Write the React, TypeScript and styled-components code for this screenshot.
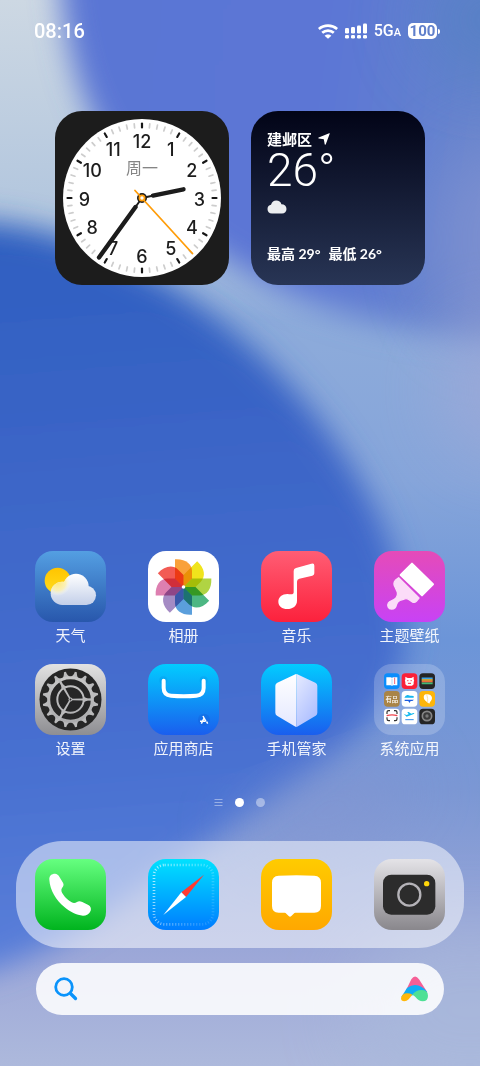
import React from "react";
import styled, { createGlobalStyle } from "styled-components";

const GlobalStyle = createGlobalStyle`
  *, *::before, *::after { box-sizing: border-box; }
  body {
    margin: 0;
    font-family: Lato, "Noto Sans CJK SC", sans-serif;
    color: #fff;
    background: #5b7fd0;
  }
  button, input { font: inherit; color: inherit; }
`;

const Screen = styled.div`
  display: grid;
  min-height: 100vh;
  overflow: hidden;
  & > * { grid-area: 1 / 1; }
`;

const WallpaperArt = styled.svg`
  width: 100%;
  height: 100%;
  min-height: 0;
  contain: size;
`;

const Home = styled.div`
  display: flex;
  flex-direction: column;
  min-height: 100vh;
  padding-bottom: 51px;
  z-index: 1;
`;

const StatusBar = styled.header`
  display: flex;
  align-items: center;
  justify-content: space-between;
  height: 62px;
  padding: 0 40px 0 34px;
`;

const Time = styled.time`
  font-family: Roboto, sans-serif;
  font-size: 20px;
  font-weight: 500;
  line-height: 24px;
`;

const StatusIcons = styled.div`
  display: flex;
  align-items: center;
  gap: 7px;
`;

const Network = styled.span`
  font-family: Roboto, sans-serif;
  font-size: 16px;
  font-weight: 500;
  line-height: 18px;
  padding-top: 1px;
  small { font-size: 11px; }
`;

const Battery = styled.span`
  display: flex;
  align-items: center;
  gap: 1px;
  &::after {
    content: "";
    width: 2px;
    height: 5px;
    border-radius: 0 2px 2px 0;
    background: #fff;
  }
`;

const BatteryLevel = styled.span`
  width: 29px;
  height: 16px;
  border-radius: 5px;
  background: #fff;
  color: #5f7fcb;
  font-family: Roboto, sans-serif;
  font-size: 15px;
  font-weight: 700;
  line-height: 16px;
  text-align: center;
`;

const Widgets = styled.section`
  display: flex;
  gap: 22px;
  padding: 49px 55px 0;
`;

const Widget = styled.article<{ $background: string }>`
  flex: 1;
  aspect-ratio: 1;
  display: flex;
  flex-direction: column;
  border-radius: 27px;
  background: ${(p) => p.$background};
  overflow: hidden;
`;

const WeatherBody = styled.div`
  flex: 1;
  display: flex;
  flex-direction: column;
  padding: 18px 16px 21px;
`;

const Place = styled.div`
  display: flex;
  align-items: center;
  gap: 6px;
  font-size: 15px;
  font-weight: 700;
  line-height: 20px;
`;

const Temperature = styled.div`
  font-family: Roboto, sans-serif;
  font-size: 46px;
  font-weight: 300;
  line-height: 42px;
  margin-bottom: 9px;
`;

const Range = styled.div`
  display: flex;
  gap: 8px;
  margin-top: auto;
  font-size: 14px;
  font-weight: 700;
  line-height: 20px;
  white-space: nowrap;
`;

const Spacer = styled.div`
  flex: 1;
  min-height: 40px;
`;

const AppGrid = styled.main`
  display: grid;
  grid-template-columns: repeat(4, 71px);
  justify-content: space-between;
  row-gap: 19px;
  padding: 0 35px;
`;

const AppButton = styled.button`
  display: flex;
  flex-direction: column;
  align-items: center;
  gap: 3px;
  width: 71px;
  padding: 0;
  border: 0;
  background: none;
  cursor: pointer;
`;

const AppIcon = styled.span<{ $background: string }>`
  display: block;
  width: 71px;
  height: 71px;
  border-radius: 18px;
  background: ${(p) => p.$background};
  overflow: hidden;
  svg { display: block; width: 100%; height: 100%; }
`;

const AppName = styled.span`
  font-size: 15px;
  line-height: 20px;
  white-space: nowrap;
  opacity: 0.92;
`;

const Pager = styled.nav`
  display: flex;
  align-items: center;
  justify-content: center;
  gap: 12px;
  height: 83px;
  padding: 6px 2px 0 0;
`;

const PageDot = styled.button<{ $current?: boolean }>`
  width: 9px;
  height: 9px;
  padding: 0;
  border: 0;
  border-radius: 50%;
  background: #fff;
  opacity: ${(p) => (p.$current ? 1 : 0.42)};
`;

const PageList = styled.button`
  display: flex;
  padding: 0;
  border: 0;
  background: none;
`;

const Dock = styled.footer`
  display: flex;
  justify-content: space-between;
  margin: 0 16px;
  padding: 18px 19px;
  border-radius: 46px;
  background: rgba(255, 255, 255, 0.5);
`;

const SearchBar = styled.form`
  display: flex;
  align-items: center;
  height: 52px;
  margin: 15px 36px 0;
  padding: 0 16px 0 18px;
  border-radius: 26px;
  background: rgba(255, 255, 255, 0.87);
`;

const SearchLabel = styled.label`
  display: flex;
`;

const SearchInput = styled.input`
  flex: 1;
  min-width: 0;
  height: 32px;
  border: 0;
  outline: 0;
  background: transparent;
  color: #1c2a48;
  font-size: 15px;
`;

const AssistantButton = styled.button`
  display: flex;
  padding: 0;
  border: 0;
  background: none;
`;

function Wallpaper() {
  return (
    <WallpaperArt viewBox="0 0 480 1066" preserveAspectRatio="none" aria-hidden="true">
      <defs>
        <linearGradient id="wpBase" x1="0" y1="0" x2="0" y2="1">
          <stop offset="0" stopColor="#cdd8e3" />
          <stop offset="0.2" stopColor="#b2c6de" />
          <stop offset="0.3" stopColor="#8dabda" />
          <stop offset="0.45" stopColor="#86a5da" />
          <stop offset="0.6" stopColor="#6c95d8" />
          <stop offset="0.74" stopColor="#7b97d4" />
          <stop offset="0.9" stopColor="#9da8d8" />
          <stop offset="1" stopColor="#adb9dc" />
        </linearGradient>
        <linearGradient id="wpTop" gradientUnits="userSpaceOnUse" x1="60" y1="80" x2="490" y2="140">
          <stop offset="0" stopColor="#5a76d4" />
          <stop offset="0.6" stopColor="#5b76d5" />
          <stop offset="0.85" stopColor="#6380d0" />
          <stop offset="1" stopColor="#6784cc" />
        </linearGradient>
        <linearGradient id="wpBlue" gradientUnits="userSpaceOnUse" x1="60" y1="220" x2="120" y2="970">
          <stop offset="0" stopColor="#2e5fc0" />
          <stop offset="0.35" stopColor="#3d66c8" />
          <stop offset="0.7" stopColor="#476fd0" />
          <stop offset="1" stopColor="#5b80da" />
        </linearGradient>
        <filter id="wpSoft" x="-30%" y="-30%" width="160%" height="160%">
          <feGaussianBlur stdDeviation="15" />
        </filter>
        <filter id="wpWide" x="-50%" y="-50%" width="200%" height="200%">
          <feGaussianBlur stdDeviation="34" />
        </filter>
      </defs>
      <rect width="480" height="1066" fill="url(#wpBase)" />
      <path d="M56 -80C60 50 80 150 190 235C280 300 380 340 580 345L580 -80Z" fill="url(#wpTop)" filter="url(#wpSoft)" />
      <ellipse cx="500" cy="240" rx="70" ry="100" fill="#8494d2" opacity="0.7" filter="url(#wpWide)" />
      <ellipse cx="500" cy="390" rx="60" ry="70" fill="#9fa9d8" opacity="0.75" filter="url(#wpWide)" />
      <ellipse cx="490" cy="20" rx="70" ry="60" fill="#5580c4" opacity="0.8" filter="url(#wpWide)" />
      <path d="M-80 222C60 208 190 285 270 365C350 445 410 550 405 640C400 735 270 800 180 860C100 915 40 970 -80 985Z" fill="url(#wpBlue)" filter="url(#wpSoft)" />
      <ellipse cx="330" cy="810" rx="90" ry="34" transform="rotate(-20 330 810)" fill="#8395d2" opacity="0.7" filter="url(#wpWide)" />
      <ellipse cx="470" cy="1010" rx="120" ry="90" fill="#a9b9dc" opacity="0.7" filter="url(#wpWide)" />
    </WallpaperArt>
  );
}

function ClockFace() {
  const ticks = Array.from({ length: 60 }, (_, i) => i);
  const hours = Array.from({ length: 12 }, (_, i) => i + 1);
  return (
    <svg viewBox="0 0 174 174" width="100%" height="100%" role="img" aria-label="时钟">
      <circle cx="87" cy="87" r="79" fill="#fff" />
      {ticks.map((i) => (
        <line
          key={i}
          x1="87"
          x2="87"
          y1="12.500"
          y2="16.500"
          strokeWidth={i % 5 ? 1.7 : 2.2}
          strokeLinecap="round"
          stroke={i % 5 ? "#cdcdcd" : "#161616"}
          transform={`rotate(${i * 6} 87 87)`}
        />
      ))}
      {hours.map((h) => {
        const a = (h * Math.PI) / 6;
        return (
          <text
            key={h}
            x={87 + 57.5 * Math.sin(a)}
            y={94.5 - 57.5 * Math.cos(a)}
            textAnchor="middle"
            fontFamily="Inter, sans-serif"
            fontSize="18"
            fontWeight="500"
            fill="#1d1d1d"
          >
            {h}
          </text>
        );
      })}
      <text x="87" y="63" textAnchor="middle" fontSize="16" fontFamily='"Noto Sans CJK SC", sans-serif' fill="#858585">
        周一
      </text>
      <g stroke="#1c1c1c" strokeLinecap="round">
        <path d="M87 87L129 78" strokeWidth="2" />
        <path d="M98 84.6L128.5 78.3" strokeWidth="4.4" />
        <path d="M87 87L44 146" strokeWidth="2" />
        <path d="M80.500 96L44 146.500" strokeWidth="4.400" />
      </g>
      <circle cx="87" cy="87" r="5" fill="#1c1c1c" />
      <path d="M80 79.500L137.500 142.500" stroke="#ff9d0a" strokeWidth="1.800" strokeLinecap="round" />
      <circle cx="87" cy="87" r="2.600" fill="#fff" stroke="#ff9d0a" strokeWidth="1.800" />
    </svg>
  );
}

function WifiIcon() {
  return (
    <svg width="20" height="15" viewBox="0 0 20 15" fill="none" stroke="#fff" aria-label="Wi-Fi" role="img">
      <path d="M0.800 5C6 0.400 14 0.400 19.200 5" strokeWidth="2.700" />
      <path d="M4.200 8.700C7.500 5.800 12.500 5.800 15.800 8.700" strokeWidth="2.700" />
      <path d="M10 14.800L6.600 11.800C8.400 10.100 11.600 10.100 13.400 11.800Z" fill="#fff" stroke="none" />
    </svg>
  );
}

function SignalIcon() {
  const tops = [5, 4, 2.5, 0.5];
  return (
    <svg width="22" height="16" viewBox="0 0 22 16" fill="#fff" aria-label="信号" role="img">
      {tops.map((top, i) => (
        <g key={top}>
          <rect x={i * 6} y={top} width="4" height={10.5 - top} rx="1.200" />
          <rect x={i * 6} y="12" width="4" height="3.500" rx="1.200" />
        </g>
      ))}
    </svg>
  );
}

function WeatherArt() {
  const cloud = (
    <>
      <circle cx="112" cy="160" r="35" />
      <circle cx="153" cy="139" r="38" />
      <circle cx="184" cy="166" r="29" />
      <rect x="112" y="145" width="72" height="50" />
    </>
  );
  return (
    <svg viewBox="30 33 213 213">
      <defs>
        <linearGradient id="wxCloud" gradientUnits="userSpaceOnUse" x1="0" y1="101" x2="0" y2="195">
          <stop offset="0" stopColor="#fff" />
          <stop offset="1" stopColor="#c3cfe9" />
        </linearGradient>
        <linearGradient id="wxSun" x1="0" y1="0" x2="0" y2="1">
          <stop offset="0" stopColor="#ffc400" />
          <stop offset="1" stopColor="#ffdc1c" />
        </linearGradient>
        <radialGradient id="wxGlow" gradientUnits="userSpaceOnUse" cx="98" cy="128" r="40">
          <stop offset="0" stopColor="#ffe97a" />
          <stop offset="0.600" stopColor="#fff1a8" stopOpacity="0.800" />
          <stop offset="1" stopColor="#fff" stopOpacity="0" />
        </radialGradient>
        <clipPath id="wxClip">{cloud}</clipPath>
      </defs>
      <circle cx="98" cy="122" r="39" fill="url(#wxSun)" />
      <g fill="url(#wxCloud)">{cloud}</g>
      <circle cx="98" cy="128" r="40" fill="url(#wxGlow)" clipPath="url(#wxClip)" />
    </svg>
  );
}

function PhotosArt() {
  const petals = ["#f9a13a", "#f0e41c", "#b0d443", "#4db783", "#5b9fdc", "#a58bc4", "#dd7fb0", "#f25b54"];
  return (
    <svg viewBox="-35.500 -36 71 71">
      {petals.map((fill, i) => (
        <path
          key={fill}
          d="M0 0L-8.500 -8.500V-27.800C2 -28.500 8.500 -23 8.500 -16V-8.500Z"
          fill={fill}
          style={{ mixBlendMode: "multiply" }}
          transform={`rotate(${i * 45})`}
        />
      ))}
      <circle r="1.800" fill="#fff" />
    </svg>
  );
}

function MusicArt() {
  return (
    <svg viewBox="33 34 213 213">
      <path
        d="M131 94Q131 87 138 85L184 72Q193 69 193 78V101Q193 107 187 108L148 117Q141 119 141 126V183C141 199 128 208 112 208C96 208 85 199 85 186C85 172 97 163 112 163C120 163 131 167 131 158Z"
        fill="#fff"
      />
    </svg>
  );
}

function BrushArt() {
  return (
    <svg viewBox="372 34 213 213" stroke="#fff" strokeLinejoin="round">
      <path d="M486 72L549 134L516 167L452 106Z" fill="#fff" strokeWidth="6" />
      <path
        d="M446 114L507 175L499 185Q493 191 486 186L476 179Q469 175 463 178L450 182Q443 185 440 193C437 207 430 208 425 208C414 208 411 197 415 190C420 181 431 185 438 175Q446 163 440 153L434 140Q429 130 436 122Z"
        fill="#fbdcf8"
        stroke="#fbdcf8"
        strokeWidth="4"
      />
    </svg>
  );
}

function SettingsArt() {
  const teeth = Array.from({ length: 16 }, (_, i) => i * 22.5 + 11);
  return (
    <svg viewBox="-35.500 -35.500 71 71">
      <defs>
        <linearGradient id="gearMetal" gradientUnits="userSpaceOnUse" x1="0" y1="-28" x2="0" y2="28">
          <stop offset="0" stopColor="#cbcbcb" />
          <stop offset="1" stopColor="#a8a8aa" />
        </linearGradient>
      </defs>
      <circle r="31" fill="#262626" />
      <g stroke="url(#gearMetal)" fill="none">
        {teeth.map((a) => (
          <path key={a} d="M-4.600 -22Q-1.600 -23.500 -1 -28H1Q1.600 -23.500 4.600 -22Z" fill="#bababb" stroke="none" transform={`rotate(${a})`} />
        ))}
        <circle r="21.800" strokeWidth="3" />
        <circle r="13.200" strokeWidth="2" />
      </g>
      {[0, 120, 240].map((a) => (
        <g key={a} transform={`rotate(${a})`} fill="#bababb">
          <path d="M1 -0.800L23 -1.300V1.300L1 0.800Z" />
          <path d="M12.500 -3L17 -1V1L12.500 3Z" />
        </g>
      ))}
      <circle r="2" fill="#bababb" />
      <circle r="0.900" fill="#262626" />
    </svg>
  );
}

function StoreArt() {
  return (
    <svg viewBox="369 27 213 213" fill="none" strokeLinecap="round">
      <circle cx="415" cy="76" r="12" fill="#0899e8" opacity="0.400" />
      <circle cx="536" cy="76" r="12" fill="#0899e8" opacity="0.400" />
      <path d="M416 77V99Q416 120 438 122Q476 125 514 122Q536 120 536 99V77" stroke="#fff" strokeWidth="12" />
      <circle cx="537" cy="194" r="18" fill="#1559cf" opacity="0.300" />
      <g stroke="#fff" strokeWidth="4.500" strokeLinecap="butt">
        <path d="M534 183L543 200" />
        <path d="M537 190L529 206" />
        <path d="M525 199H540" />
        <path d="M545 200L548 206" />
      </g>
    </svg>
  );
}

function ShieldArt() {
  return (
    <svg viewBox="33 27 213 213">
      <defs>
        <linearGradient id="shieldLeft" x1="0" y1="0" x2="0" y2="1">
          <stop offset="0" stopColor="#fff" />
          <stop offset="1" stopColor="#e4e8ff" />
        </linearGradient>
        <linearGradient id="shieldRight" x1="0" y1="0" x2="0.600" y2="1">
          <stop offset="0" stopColor="#e6ebff" />
          <stop offset="1" stopColor="#aebfff" />
        </linearGradient>
      </defs>
      <path d="M139 57Q136 57 133 59L82 83Q76 86 76 92V173Q76 179 81 182L134 214Q137 216 139 216Z" fill="url(#shieldLeft)" />
      <path d="M139 57Q142 57 145 59L196 83Q202 86 202 92V173Q202 179 197 182L144 214Q141 216 139 216Z" fill="url(#shieldRight)" />
    </svg>
  );
}

function FolderArt() {
  const fills = ["#0b8dfb", "#fa2138", "#252525", "#a98447", "#fff", "#fdb50a", "#fff", "#fff", "#252525"];
  return (
    <svg viewBox="12 14 213 213">
      {fills.map((fill, i) => (
        <rect key={i} x={42 + (i % 3) * 53} y={42 + Math.floor(i / 3) * 53} width="47" height="47" rx="11" fill={fill} />
      ))}
      <path d="M49 54H62Q65 54 66 56Q67 54 70 54H82V78H70Q67 78 66 80Q65 78 62 78H49Z" fill="#fff" />
      <path d="M66 58V76" stroke="#8ac3f8" strokeWidth="2" />
      <path d="M74 55V74" stroke="#f0647a" strokeWidth="3" />
      <path d="M106 52L113 56H124L131 52V60Q134 64 131 68V75L126 79H111L106 75V68Q103 64 106 60Z" fill="#fff" />
      <path d="M113 64H114M123 64H124M115 72H122" stroke="#fa2138" strokeWidth="3" strokeLinecap="round" />
      <path d="M155 57H188" stroke="#3ca4e8" strokeWidth="5" />
      <path d="M155 62H188" stroke="#ffc531" strokeWidth="5" />
      <path d="M155 67H188" stroke="#ee6a40" strokeWidth="5" />
      <path d="M155 72H188" stroke="#41b976" strokeWidth="5" />
      <text x="65.500" y="127" textAnchor="middle" fontSize="19" fontWeight="500" fill="#fff">有品</text>
      <path d="M103 115Q107 106 114 107Q118 110 124 109L131 110V115Z" fill="#17b7ee" />
      <path d="M104 121H132L127 125H122L118 131L115 125H104Z" fill="#1c5de0" />
      <path d="M171 128C160 122 158 108 167 105C177 103 186 107 186 116C186 124 179 127 178 133Z" fill="#fff" />
      <path d="M170 105Q174 116 173 130" stroke="#fde4a5" strokeWidth="3" fill="none" />
      <path d="M51 164V158Q51 154 56 154H60M72 154H76Q81 154 81 159V164M81 174V179Q81 184 76 184H72M60 184H56Q51 184 51 179V174" stroke="#303030" strokeWidth="3.500" fill="none" />
      <path d="M50 169Q66 164 82 169" stroke="#f0444c" strokeWidth="4" fill="none" />
      <path d="M101 163L109 167L116 165L112 158H116L124 163Q133 159 133 163L110 172Z" fill="#12b8ee" />
      <path d="M106 181H131" stroke="#2c8ceb" strokeWidth="3" />
      <circle cx="171" cy="170" r="14" fill="#3a3a3a" stroke="#858585" strokeWidth="5" />
      <circle cx="171" cy="170" r="5" fill="#777" />
    </svg>
  );
}

function PhoneArt() {
  return (
    <svg viewBox="76 208 213 213">
      <path
        d="M119 270C118 258 126 252 136 252C142 252 146 256 149 261L160 279C164 286 160 290 157 295C153 301 156 308 160 314C168 326 176 333 186 338C192 341 197 340 202 337C207 334 212 335 218 337L236 346C243 350 245 356 243 363C239 373 230 378 220 378C200 377 182 367 165 353C139 331 121 302 119 270Z"
        fill="#fff"
      />
    </svg>
  );
}

function BrowserArt() {
  return (
    <svg viewBox="414 208 213 213">
      <defs>
        <linearGradient id="dialFade" x1="0" y1="0.300" x2="1" y2="0.700">
          <stop offset="0" stopColor="#fff" stopOpacity="0.650" />
          <stop offset="1" stopColor="#fff" stopOpacity="0.150" />
        </linearGradient>
      </defs>
      <rect x="432" y="226" width="177" height="178" rx="32" fill="none" stroke="url(#dialFade)" strokeWidth="8" strokeDasharray="3 6" />
      <path d="M582 255L514 308L528 322Z" fill="#ff3b30" />
      <path d="M460 376L514 308L528 322Z" fill="#fff" />
    </svg>
  );
}

function MessagesArt() {
  return (
    <svg viewBox="753 208 213 213">
      <path
        d="M806 258Q860 256 913 258Q933 259 933 279V349Q933 369 913 369H856Q853 369 851 372L844 379Q840 383 836 379L829 372Q827 369 824 369H806Q786 369 786 349V279Q786 259 806 258Z"
        fill="#fff"
      />
    </svg>
  );
}

function CameraArt() {
  return (
    <svg viewBox="1092 208 213 213">
      <rect x="1119" y="255" width="157" height="120" rx="25" fill="#2c2c2c" />
      <circle cx="1198" cy="315" r="33" fill="none" stroke="#b5b3b8" strokeWidth="7" />
      <circle cx="1250" cy="282" r="8" fill="#ffd60a" />
    </svg>
  );
}

function AssistantLogo() {
  return (
    <svg width="27" height="26" viewBox="1173 555 81 78" aria-hidden="true">
      <path d="M1188 598L1204 565Q1215 548 1227 565L1252 604L1220 600Z" fill="#f55f96" />
      <path d="M1174 618L1191 591Q1213 574 1235 588Q1244 592 1252 604L1207 613L1180 618Z" fill="#10adf5" />
      <path d="M1173 621Q1176 607 1191 607Q1201 607 1207 611L1196 625Q1190 631 1183 631Q1173 631 1173 621Z" fill="#ffb80c" />
      <path d="M1206 612Q1218 597 1234 597Q1254 597 1254 614Q1254 631 1238 631Q1226 631 1217 619Q1211 612 1206 612Z" fill="#4fe095" />
    </svg>
  );
}

type App = { name: string; background: string; art: React.ReactNode };

const apps: App[] = [
  { name: "天气", background: "linear-gradient(#549fe2, #2857ac)", art: <WeatherArt /> },
  { name: "相册", background: "#fff", art: <PhotosArt /> },
  { name: "音乐", background: "linear-gradient(#ff5d74, #fc213c)", art: <MusicArt /> },
  { name: "主题壁纸", background: "linear-gradient(#e54bb8, #c842f5)", art: <BrushArt /> },
  { name: "设置", background: "linear-gradient(#e2e2e2, #8e8e92)", art: <SettingsArt /> },
  { name: "应用商店", background: "linear-gradient(#02ccff, #1a5eee)", art: <StoreArt /> },
  { name: "手机管家", background: "linear-gradient(#02ccff, #1a5eee)", art: <ShieldArt /> },
  { name: "系统应用", background: "rgba(255, 255, 255, 0.2)", art: <FolderArt /> },
];

const dockApps: App[] = [
  { name: "电话", background: "linear-gradient(#66ff80, #00b41e)", art: <PhoneArt /> },
  { name: "浏览器", background: "linear-gradient(#00e2ff, #007cff)", art: <BrowserArt /> },
  { name: "短信", background: "linear-gradient(#ffcb00, #ffa800)", art: <MessagesArt /> },
  { name: "相机", background: "linear-gradient(#e4e3e7, #89878c)", art: <CameraArt /> },
];

export default function App() {
  return (
    <>
      <GlobalStyle />
      <Screen>
        <Wallpaper />
        <Home>
          <StatusBar>
            <Time>08:16</Time>
            <StatusIcons>
              <WifiIcon />
              <SignalIcon />
              <Network>5G<small>A</small></Network>
              <Battery>
                <BatteryLevel>100</BatteryLevel>
              </Battery>
            </StatusIcons>
          </StatusBar>

          <Widgets>
            <Widget $background="#1c1c1c">
              <ClockFace />
            </Widget>
            <Widget $background="linear-gradient(#020417, #283555)">
              <WeatherBody>
                <Place>
                  建邺区
                  <svg width="12" height="12" viewBox="0 0 12 12" fill="#fff" aria-hidden="true">
                    <path d="M11.200 0.300Q12 0 11.700 0.800L7.800 11.300Q7.300 12.200 6.700 11.200L5.800 6.300L0.800 5.600Q-0.300 5 0.700 4.400Z" />
                  </svg>
                </Place>
                <Temperature>26°</Temperature>
                <svg width="20" height="14" viewBox="0 0 20 14" aria-hidden="true">
                  <path d="M5 13.500C2 13.500 0.500 11.500 0.500 9C0.500 6.500 2 5 4 4.800C5 2 6.700 0.600 9.200 0.600C12 0.600 13.700 2 14.400 4.200C17.500 4.200 19.500 6 19.500 9C19.500 11.700 17.700 13.500 15 13.500Z" fill="#eceef0" />
                </svg>
                <Range>
                  <span>最高 29°</span>
                  <span>最低 26°</span>
                </Range>
              </WeatherBody>
            </Widget>
          </Widgets>

          <Spacer />

          <AppGrid>
            {apps.map((app) => (
              <AppButton key={app.name} type="button">
                <AppIcon $background={app.background}>{app.art}</AppIcon>
                <AppName>{app.name}</AppName>
              </AppButton>
            ))}
          </AppGrid>

          <Pager aria-label="页面">
            <PageList type="button" aria-label="负一屏">
              <svg width="9" height="9" viewBox="0 0 9 9" stroke="#fff" opacity="0.420" aria-hidden="true">
                <path d="M0.500 1.500H8.500M0.500 4.500H8.500M0.500 7.500H8.500" strokeWidth="1" />
              </svg>
            </PageList>
            <PageDot type="button" $current aria-label="第一页" aria-current="page" />
            <PageDot type="button" aria-label="第二页" />
          </Pager>

          <Dock>
            {dockApps.map((app) => (
              <AppButton key={app.name} type="button" aria-label={app.name}>
                <AppIcon $background={app.background}>{app.art}</AppIcon>
              </AppButton>
            ))}
          </Dock>

          <SearchBar role="search">
            <SearchLabel htmlFor="home-search" aria-label="搜索">
              <svg width="24" height="24" viewBox="0 0 24 24" fill="none" stroke="#0a93fb" strokeLinecap="round" aria-hidden="true">
                <circle cx="10" cy="10" r="8.300" strokeWidth="2.800" />
                <path d="M16.500 16.500L21.500 21.500" strokeWidth="3.300" />
              </svg>
            </SearchLabel>
            <SearchInput id="home-search" type="text" />
            <AssistantButton type="button" aria-label="语音助手">
              <AssistantLogo />
            </AssistantButton>
          </SearchBar>
        </Home>
      </Screen>
    </>
  );
}
